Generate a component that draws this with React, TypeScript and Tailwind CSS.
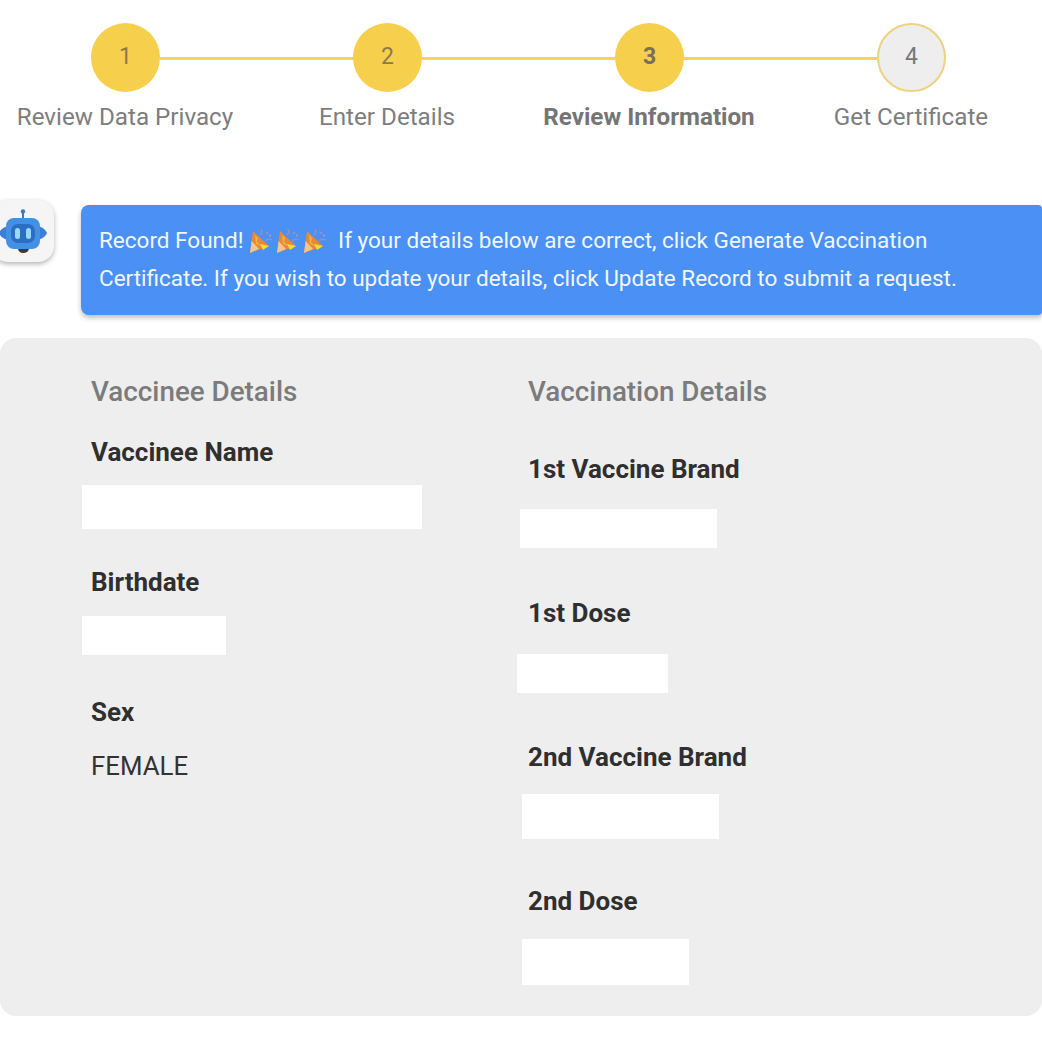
const steps = [
  { n: "1", label: "Review Data Privacy" },
  { n: "2", label: "Enter Details" },
  { n: "3", label: "Review Information", active: true },
  { n: "4", label: "Get Certificate", pending: true },
];

const Popper = () => (
  <svg width="24" height="26" viewBox="0 0 24 26" className="inline-block align-[-6px] mr-[3px]">
    <path d="M1 25 L4 3 L20 18 Z" fill="#e68a35" />
    <path d="M1 25 L2.6 13 L10 21 Z" fill="#f2c592" />
    <path d="M6 7 L9 10 L8 14 L12 18 L7 16 Z" fill="#f3b04a" />
    <path d="M11 16 L20 18 L14 22 Z" fill="#f6d93a" />
    <path d="M11 7 Q14 4 12 1 M16 13 Q19 10 23 12" stroke="#b98fa8" strokeWidth="1.3" fill="none" opacity="0.75" />
    <circle cx="18" cy="5" r="1.3" fill="#a98cc8" opacity="0.8" />
    <circle cx="21" cy="7.5" r="1" fill="#c6a0b8" opacity="0.8" />
  </svg>
);

const Bot = () => (
  <svg width="48" height="46" viewBox="0 0 48 46">
    <line x1="24" y1="4" x2="24" y2="11" stroke="#3c78c8" strokeWidth="2" />
    <circle cx="24" cy="3.5" r="2.2" fill="#3c78c8" />
    <path d="M9 18 Q2 20 0 25 Q2 30 9 32 Z" fill="#3b7fd6" />
    <path d="M39 18 Q46 20 48 25 Q46 30 39 32 Z" fill="#3b7fd6" />
    <rect x="7" y="10" width="34" height="31" rx="8" fill="#4490e4" />
    <rect x="12" y="16" width="24" height="19" rx="7" fill="#2a6fc4" />
    <rect x="16" y="20" width="5" height="11" rx="2.5" fill="#9ad8f7" />
    <rect x="27" y="20" width="5" height="11" rx="2.5" fill="#9ad8f7" />
    <path d="M19 41 H30 Q29 45 24 45 Q20 45 19 41 Z" fill="#3a3a3a" />
  </svg>
);

const Field = ({ label, className, children }: { label: string; className?: string; children?: React.ReactNode }) => (
  <div className={className}>
    <div className="text-[26px] leading-[30px] font-bold text-[#2f2f2f]">{label}</div>
    {children}
  </div>
);

export default function App() {
  return (
    <div className="w-[1042px] h-[1042px] overflow-hidden bg-white font-['Roboto',sans-serif]">
      {/* stepper */}
      <div className="flex items-center pl-[91px] pt-[23px]">
        {steps.map((s, i) => (
          <div key={s.n} className="flex items-center">
            <div
              className={
                s.pending
                  ? "w-[69px] h-[69px] rounded-full flex items-center justify-center bg-[#eeeeee] border-2 border-[#ecd281] text-[23px] text-[#777777]"
                  : s.active
                    ? "w-[69px] h-[69px] rounded-full flex items-center justify-center bg-[#f6cf4c] text-[23px] font-bold text-[#77705a]"
                    : "w-[69px] h-[69px] rounded-full flex items-center justify-center bg-[#f6cf4c] text-[23px] text-[#8b7b4b]"
              }
            >
              {s.n}
            </div>
            {i < 3 && <div className="w-[193px] h-[3px] bg-[#f6d355] mt-[2px]" />}
          </div>
        ))}
      </div>
      <div className="flex -ml-[6px] mt-[9px] w-[1048px]">
        {steps.map((s) => (
          <div
            key={s.n}
            className={
              s.active
                ? "w-[262px] text-center text-[24.2px] leading-[32px] font-bold text-[#757575] whitespace-nowrap"
                : "w-[262px] text-center text-[24.2px] leading-[32px] text-[#7d7d7d] whitespace-nowrap"
            }
          >
            {s.label}
          </div>
        ))}
      </div>

      {/* bot message */}
      <div className="flex items-start mt-[72px]">
        <div className="w-[81px] shrink-0 -mt-[5px]">
          <div className="w-[62px] h-[62px] -ml-[8px] rounded-[16px] bg-[#f5f5f5] shadow-[0_2px_5px_rgba(0,0,0,0.3)] flex items-center justify-center">
            <Bot />
          </div>
        </div>
        <div className="flex-1 h-[110px] rounded-l-[8px] rounded-r-[4px] bg-[#4a90f5] shadow-[0_3px_5px_rgba(0,0,0,0.25)] pl-[18px] pt-[16px] text-[22.5px] leading-[38px] text-[#f2f7ff] whitespace-nowrap">
          <div>
            Record Found! <Popper /><Popper /><Popper /><span className="ml-[8px]">If your details below are correct, click Generate Vaccination</span>
          </div>
          <div>Certificate. If you wish to update your details, click Update Record to submit a request.</div>
        </div>
      </div>

      {/* details panel */}
      <div className="mt-[23px] h-[678px] rounded-[16px] bg-[#eeeeee] flex pl-[91px] pt-[38px]">
        <div className="w-[437px] shrink-0">
          <h2 className="text-[27.8px] leading-[32px] font-medium text-[#7b7b7b]">Vaccinee Details</h2>
          <Field label="Vaccinee Name" className="mt-[29px]">
            <div className="-ml-[9px] mt-[18px] w-[340px] h-[44px] bg-white" />
          </Field>
          <Field label="Birthdate" className="mt-[38px]">
            <div className="-ml-[9px] mt-[19px] w-[144px] h-[39px] bg-white" />
          </Field>
          <Field label="Sex" className="mt-[42px]">
            <div className="mt-[24px] text-[25.8px] leading-[30px] text-[#333333]">FEMALE</div>
          </Field>
        </div>
        <div>
          <h2 className="text-[27.8px] leading-[32px] font-medium text-[#7b7b7b]">Vaccination Details</h2>
          <Field label="1st Vaccine Brand" className="mt-[46px]">
            <div className="-ml-[8px] mt-[25px] w-[197px] h-[39px] bg-white" />
          </Field>
          <Field label="1st Dose" className="mt-[50px]">
            <div className="-ml-[11px] mt-[26px] w-[151px] h-[39px] bg-white" />
          </Field>
          <Field label="2nd Vaccine Brand" className="mt-[49px]">
            <div className="-ml-[6px] mt-[22px] w-[197px] h-[45px] bg-white" />
          </Field>
          <Field label="2nd Dose" className="mt-[47px]">
            <div className="-ml-[6px] mt-[23px] w-[167px] h-[46px] bg-white" />
          </Field>
        </div>
      </div>
    </div>
  );
}
